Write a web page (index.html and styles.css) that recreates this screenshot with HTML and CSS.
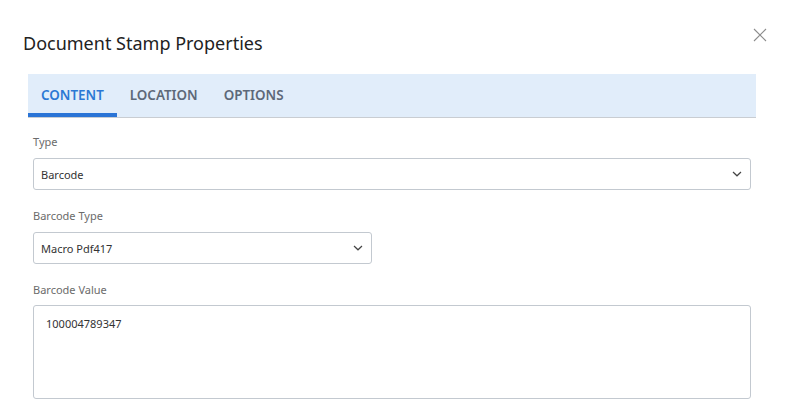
FILE: index.html
```html
<!DOCTYPE html>
<html lang="en">
<head>
<meta charset="utf-8">
<title>Document Stamp Properties</title>
<link rel="stylesheet" href="styles.css">
</head>
<body>
<div class="dialog">
  <header class="header">
    <h1 class="title">Document Stamp Properties</h1>
    <button class="close" aria-label="Close">
      <svg width="14" height="14" viewBox="0 0 14 14"><path d="M1 1L13 13M13 1L1 13" stroke="#8c8c8c" stroke-width="1.1" fill="none"/></svg>
    </button>
  </header>
  <div class="content">
    <nav class="tabs">
      <div class="tab active">CONTENT</div>
      <div class="tab">LOCATION</div>
      <div class="tab">OPTIONS</div>
    </nav>
    <div class="form">
      <div class="field">
        <div class="label">Type</div>
        <div class="select">
          <span>Barcode</span>
          <svg class="chev" width="10" height="6" viewBox="0 0 10 6"><path d="M1 1L5 4.8L9 1" stroke="#444" stroke-width="1.2" fill="none"/></svg>
        </div>
      </div>
      <div class="field">
        <div class="label">Barcode Type</div>
        <div class="select narrow">
          <span>Macro Pdf417</span>
          <svg class="chev" width="10" height="6" viewBox="0 0 10 6"><path d="M1 1L5 4.8L9 1" stroke="#444" stroke-width="1.2" fill="none"/></svg>
        </div>
      </div>
      <div class="field">
        <div class="label tight">Barcode Value</div>
        <div class="textarea">100004789347</div>
      </div>
    </div>
  </div>
</div>
</body>
</html>
```
FILE: styles.css
```css
* { box-sizing: border-box; }
html, body { margin: 0; padding: 0; background: #fff; }
body { font-family: "Noto Sans", "Open Sans", sans-serif; color: #333; }

.dialog { width: 790px; }

.header {
  height: 74px;
  padding: 0 23px;
  display: flex;
  justify-content: space-between;
  align-items: flex-start;
}
.title {
  margin: 0;
  padding-top: 30px;
  font-size: 18px;
  line-height: 26px;
  font-weight: 400;
  color: #222;
}
.close {
  margin-top: 28px;
  padding: 0;
  border: 0;
  background: none;
  width: 14px;
  height: 14px;
  display: block;
}
.close svg { display: block; }

.content { padding: 0 34px 0 28px; }

.tabs {
  display: flex;
  background: #e1edfa;
  border-bottom: 1px solid #c9cdd2;
  height: 44px;
}
.tab {
  height: 43px;
  padding: 2px 13px 0;
  display: flex;
  align-items: center;
  font-size: 13.4px;
  font-weight: 600;
  color: #5d6878;
  border-bottom: 4px solid transparent;
}
.tab.active {
  color: #2b78d4;
  border-bottom-color: #2a74d6;
}

.form { padding: 16px 5px 0; }
.field { margin-bottom: 18px; }
.label {
  font-size: 11px;
  line-height: 16px;
  color: #6b6b6b;
  margin-bottom: 8px;
}
.label.tight { margin-bottom: 7px; }
.select {
  height: 32px;
  border: 1px solid #c3c9d0;
  border-radius: 3px;
  padding: 0 8px 0 7px;
  display: flex;
  align-items: center;
  justify-content: space-between;
  font-size: 11px;
  color: #333;
}
.select.narrow { width: 339px; }
.chev { display: block; }
.textarea {
  height: 94px;
  border: 1px solid #c3c9d0;
  border-radius: 3px;
  padding: 10px 12px;
  font-size: 11px;
  line-height: 16px;
  color: #333;
}
```
